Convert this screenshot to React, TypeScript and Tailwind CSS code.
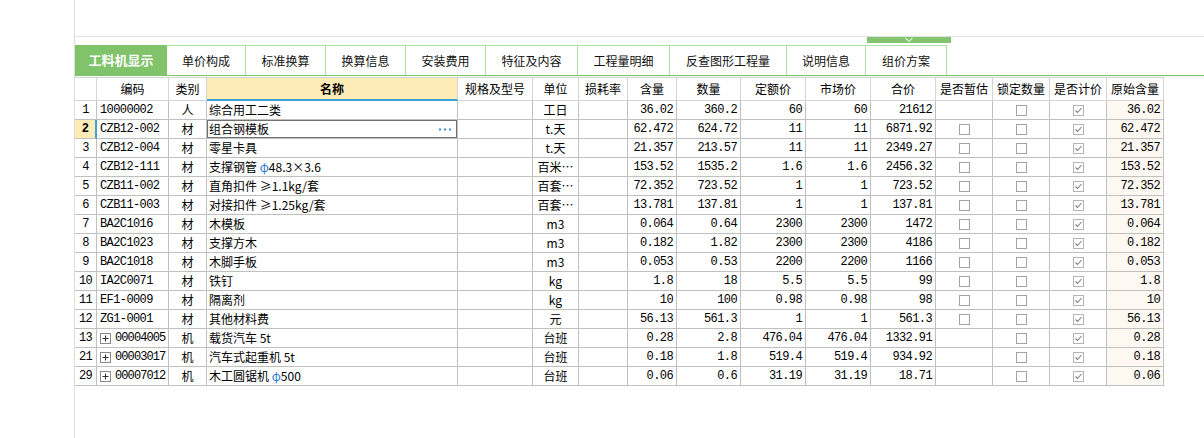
import React from 'react'

const COLS = 'grid grid-cols-[22px_72px_38px_251px_75px_46px_49px_49px_64px_65px_65px_65px_57px_57px_57px_57px]'
const CJK = "font-['Noto_Sans_CJK_SC',sans-serif]"
const MONO = "font-['Liberation_Mono','Noto_Sans_CJK_SC',monospace] text-[11px] tracking-[-0.6px]"

const TABS = [
  { label: '工料机显示', w: 'w-[92px]' },
  { label: '单价构成', w: 'w-[79px]' },
  { label: '标准换算', w: 'w-[80px]' },
  { label: '换算信息', w: 'w-[80px]' },
  { label: '安装费用', w: 'w-[80px]' },
  { label: '特征及内容', w: 'w-[92px]' },
  { label: '工程量明细', w: 'w-[92px]' },
  { label: '反查图形工程量', w: 'w-[117px]' },
  { label: '说明信息', w: 'w-[79px]' },
  { label: '组价方案', w: 'w-[81px]' },
]

const HEADERS = ['', '编码', '类别', '名称', '规格及型号', '单位', '损耗率', '含量', '数量', '定额价', '市场价', '合价', '是否暂估', '锁定数量', '是否计价', '原始含量']

type Row = {
  n: string
  code: string
  expand?: boolean
  type: string
  name: React.ReactNode
  unit: string
  qty: string
  amount: string
  quota: string
  market: string
  total: string
  est: boolean
}

const phi = <span className="text-[#2a78d6]">φ</span>

const ROWS: Row[] = [
  { n: '1', code: '10000002', type: '人', name: '综合用工二类', unit: '工日', qty: '36.02', amount: '360.2', quota: '60', market: '60', total: '21612', est: false },
  { n: '2', code: 'CZB12-002', type: '材', name: '组合钢模板', unit: 't.天', qty: '62.472', amount: '624.72', quota: '11', market: '11', total: '6871.92', est: true },
  { n: '3', code: 'CZB12-004', type: '材', name: '零星卡具', unit: 't.天', qty: '21.357', amount: '213.57', quota: '11', market: '11', total: '2349.27', est: true },
  { n: '4', code: 'CZB12-111', type: '材', name: <>支撑钢管 {phi}48.3×3.6</>, unit: '百米…', qty: '153.52', amount: '1535.2', quota: '1.6', market: '1.6', total: '2456.32', est: true },
  { n: '5', code: 'CZB11-002', type: '材', name: '直角扣件 ≥1.1kg/套', unit: '百套…', qty: '72.352', amount: '723.52', quota: '1', market: '1', total: '723.52', est: true },
  { n: '6', code: 'CZB11-003', type: '材', name: '对接扣件 ≥1.25kg/套', unit: '百套…', qty: '13.781', amount: '137.81', quota: '1', market: '1', total: '137.81', est: true },
  { n: '7', code: 'BA2C1016', type: '材', name: '木模板', unit: 'm3', qty: '0.064', amount: '0.64', quota: '2300', market: '2300', total: '1472', est: true },
  { n: '8', code: 'BA2C1023', type: '材', name: '支撑方木', unit: 'm3', qty: '0.182', amount: '1.82', quota: '2300', market: '2300', total: '4186', est: true },
  { n: '9', code: 'BA2C1018', type: '材', name: '木脚手板', unit: 'm3', qty: '0.053', amount: '0.53', quota: '2200', market: '2200', total: '1166', est: true },
  { n: '10', code: 'IA2C0071', type: '材', name: '铁钉', unit: 'kg', qty: '1.8', amount: '18', quota: '5.5', market: '5.5', total: '99', est: true },
  { n: '11', code: 'EF1-0009', type: '材', name: '隔离剂', unit: 'kg', qty: '10', amount: '100', quota: '0.98', market: '0.98', total: '98', est: true },
  { n: '12', code: 'ZG1-0001', type: '材', name: '其他材料费', unit: '元', qty: '56.13', amount: '561.3', quota: '1', market: '1', total: '561.3', est: true },
  { n: '13', code: '00004005', expand: true, type: '机', name: '载货汽车 5t', unit: '台班', qty: '0.28', amount: '2.8', quota: '476.04', market: '476.04', total: '1332.91', est: false },
  { n: '21', code: '00003017', expand: true, type: '机', name: '汽车式起重机 5t', unit: '台班', qty: '0.18', amount: '1.8', quota: '519.4', market: '519.4', total: '934.92', est: false },
  { n: '29', code: '00007012', expand: true, type: '机', name: <>木工圆锯机 {phi}500</>, unit: '台班', qty: '0.06', amount: '0.6', quota: '31.19', market: '31.19', total: '18.71', est: false },
]

function Box({ checked }: { checked?: boolean }) {
  return (
    <span className={`inline-block h-[11px] w-[11px] bg-white border ${checked ? 'border-[#b4b4b4]' : 'border-[#a2a2a2]'}`}>
      {checked && (
        <svg width="9" height="9" viewBox="0 0 9 9" className="block">
          <path d="M1.5 4.5 L3.5 6.5 L7.5 2" fill="none" stroke="#7e7e7e" strokeWidth="1.1" />
        </svg>
      )}
    </span>
  )
}

function Plus() {
  return (
    <span className="inline-flex h-[11px] w-[11px] shrink-0 items-center justify-center border border-[#8a8a8a] bg-white">
      <svg width="9" height="9" viewBox="0 0 9 9" className="block">
        <path d="M4.5 1.5 V7.5 M1.5 4.5 H7.5" stroke="#333" strokeWidth="1" />
      </svg>
    </span>
  )
}

const cell = 'h-[19px] border-r border-b border-[#c0c0c0] leading-[18px] text-[12px] whitespace-nowrap overflow-hidden text-black'
const num = `${cell} ${MONO} text-right pr-[3px]`
const mid = `${cell} flex items-center justify-center`

export default function App() {
  return (
    <div className={`h-[438px] w-[1204px] overflow-hidden bg-white pl-[74px] ${CJK}`}>
      <div className="h-full border-l border-[#dcdcdc]">
        <div className="h-[37px] border-b border-[#e2e2e2]" />
        <div className="ml-[792px] flex h-[6px] w-[84px] items-center justify-center bg-[#84c46e]">
          <svg width="10" height="6" viewBox="0 0 10 6" className="block">
            <path d="M1.5 1 L5 4.5 L8.5 1" fill="none" stroke="#d6efcc" strokeWidth="1.2" />
          </svg>
        </div>

        <div className="mt-[2px] flex h-[31px] border-b border-[#7cc468]">
          {TABS.map((t, i) =>
            i === 0 ? (
              <div key={t.label} className={`${t.w} flex items-center justify-center bg-[#80c36a] text-[13px] font-bold text-white`}>
                {t.label}
              </div>
            ) : (
              <div key={t.label} className={`${t.w} flex items-center justify-center border-t border-r border-[#ace3a0] text-[12px] text-[#111]`}>
                {t.label}
              </div>
            )
          )}
        </div>

        <div className={`mt-[1px] w-[1089px] ${COLS}`}>
          {HEADERS.map((h, i) => (
            <div
              key={i}
              className={`flex h-[24px] items-center justify-center border-t border-r border-b text-[12px] text-black ${
                i === 3 ? 'border-[#d4d4d4] border-b-2 border-b-[#3ba3d6] bg-[#fdecb6] font-bold' : 'border-[#d4d4d4] bg-white'
              }`}
            >
              {h}
            </div>
          ))}

          {ROWS.map((r) => {
            const sel = r.n === '2'
            return (
              <React.Fragment key={r.n}>
                <div
                  className={`${cell} ${MONO} text-center ${
                    sel ? 'border-r-2 border-r-[#3ba3d6] bg-[#fdecb6] font-bold text-[12px]' : ''
                  }`}
                >
                  {r.n}
                </div>
                <div className={`${cell} ${MONO} flex items-center gap-[4px] pl-[3px] ${r.expand ? 'tracking-[-0.9px]' : ''}`}>
                  {r.expand && <Plus />}
                  <span>{r.code}</span>
                </div>
                <div className={`${mid}`}>{r.type}</div>
                <div className={`${cell} relative pl-[2px]`}>
                  {r.name}
                  {sel && (
                    <div className="absolute inset-[-1px] flex items-center justify-end border-2 border-[#727272] pr-[5px]">
                      <svg width="12" height="3" viewBox="0 0 12 3" className="block">
                        <rect x="0" y="0.5" width="2" height="2" fill="#3b8fd9" />
                        <rect x="5" y="0.5" width="2" height="2" fill="#3b8fd9" />
                        <rect x="10" y="0.5" width="2" height="2" fill="#3b8fd9" />
                      </svg>
                    </div>
                  )}
                </div>
                <div className={cell} />
                <div className={`${mid}`}>{r.unit}</div>
                <div className={cell} />
                <div className={num}>{r.qty}</div>
                <div className={num}>{r.amount}</div>
                <div className={num}>{r.quota}</div>
                <div className={num}>{r.market}</div>
                <div className={num}>{r.total}</div>
                <div className={mid}>{r.est && <Box />}</div>
                <div className={mid}>
                  <Box />
                </div>
                <div className={mid}>
                  <Box checked />
                </div>
                <div className={`${num} bg-[#fdf8f1]`}>{r.qty}</div>
              </React.Fragment>
            )
          })}
        </div>
      </div>
    </div>
  )
}
